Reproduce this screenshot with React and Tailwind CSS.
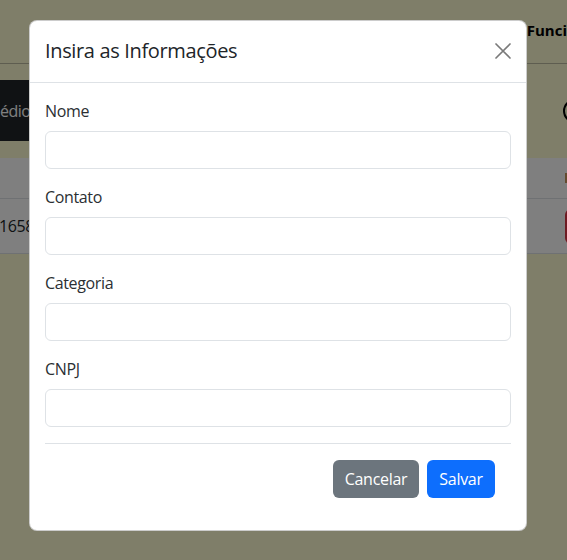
const fields = ["Nome", "Contato", "Categoria", "CNPJ"];

function CloseIcon() {
  return (
    <svg width="16" height="16" viewBox="0 0 16 16" fill="none">
      <path d="M1 1L15 15M15 1L1 15" stroke="#7a7a7a" strokeWidth="1.7" strokeLinecap="round" />
    </svg>
  );
}

function PageBehind() {
  return (
    <div className="w-full h-full bg-[#fefcd3]">
      {/* navbar */}
      <div className="h-[64px] border-b border-[#bcbba0] flex justify-end pt-[19px]">
        <span className="text-[15px] font-bold text-black whitespace-nowrap">Funci</span>
      </div>

      {/* toolbar */}
      <div className="mt-[16px] h-[61px] flex items-center justify-between">
        <div className="h-full w-[160px] bg-[#212529] text-white flex items-center text-[16px] tracking-[-0.5px]">
          édio
        </div>
        <div className="w-[24px] h-[24px] rounded-full border-2 border-black mr-[-20px]" />
      </div>

      {/* table */}
      <div className="mt-[17px] bg-white">
        <div className="h-[41px] border-b border-[#dee2e6] flex items-center justify-end">
          <div className="w-[2px] h-[10px] bg-[#c8965f]" />
        </div>
        <div className="h-[55px] border-b border-[#dee2e6] flex items-center justify-between">
          <span className="text-[16px] text-[#212529] -ml-[1px] tracking-[-0.4px]">1658</span>
          <div className="w-[40px] h-[35px] rounded-[6px] bg-[#dc3545] mr-[-38px]" />
        </div>
      </div>
    </div>
  );
}

export default function App() {
  return (
    <div
      className="relative w-[567px] h-[560px] overflow-hidden"
      style={{ fontFamily: '"Segoe UI", "Open Sans", "Noto Sans", sans-serif' }}
    >
      <PageBehind />

      {/* backdrop + modal */}
      <div className="absolute inset-0 bg-black/50 pt-[20px] pl-[29px]">
        <div className="w-[498px] bg-white rounded-[8px] border border-black/20 text-[#2b2f33]">
          <div className="h-[63px] pl-[15px] pr-[15px] flex items-center justify-between border-b border-[#dee2e6] -mt-px">
            <h5 className="text-[20px] leading-[30px] font-normal tracking-[-0.35px] text-[#212529]">
              Insira as Informações
            </h5>
            <button className="w-[16px] h-[16px] flex items-center justify-center">
              <CloseIcon />
            </button>
          </div>

          <div className="pt-4 pb-4 pl-[15px] pr-[15px]">
            {fields.map((f) => (
              <div key={f} className="mb-4">
                <label className="block mb-2 text-[16px] leading-6 tracking-[-0.35px]">{f}</label>
                <input
                  type="text"
                  className="block w-full h-[38px] rounded-[6px] border border-[#dee2e6] bg-white px-3 outline-none"
                />
              </div>
            ))}
            <hr className="border-0 border-t border-[#dee2e6]" />
            <div className="mt-4 mb-4 pr-4 flex justify-end gap-2">
              <button className="w-[86px] h-[38px] rounded-[6px] bg-[#6c757d] text-white text-[16px] tracking-[-0.3px]">
                Cancelar
              </button>
              <button className="w-[68px] h-[38px] rounded-[6px] bg-[#0d6efd] text-white text-[16px] tracking-[-0.3px]">
                Salvar
              </button>
            </div>
          </div>
        </div>
      </div>
    </div>
  );
}
